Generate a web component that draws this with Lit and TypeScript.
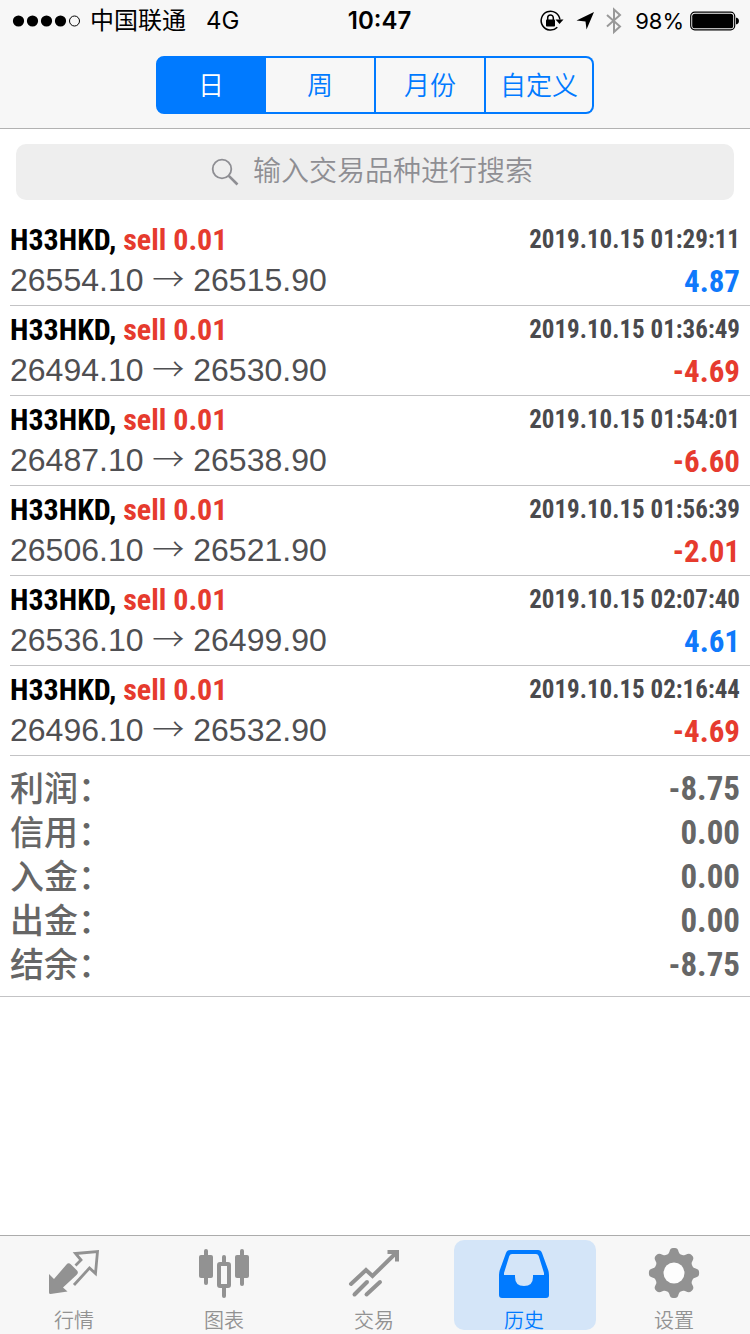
import { LitElement, html, css, svg } from "lit";
import { customElement, property, state } from "lit/decorators.js";
import { classMap } from "lit/directives/class-map.js";

interface Deal {
  symbol: string;
  side: string;
  volume: string;
  open: string;
  close: string;
  time: string;
  profit: string;
}

const deal = (open: string, close: string, time: string, profit: string): Deal => ({
  symbol: "H33HKD",
  side: "sell",
  volume: "0.01",
  open,
  close,
  time: `2019.10.15 ${time}`,
  profit,
});

const DEALS: Deal[] = [
  deal("26554.10", "26515.90", "01:29:11", "4.87"),
  deal("26494.10", "26530.90", "01:36:49", "-4.69"),
  deal("26487.10", "26538.90", "01:54:01", "-6.60"),
  deal("26506.10", "26521.90", "01:56:39", "-2.01"),
  deal("26536.10", "26499.90", "02:07:40", "4.61"),
  deal("26496.10", "26532.90", "02:16:44", "-4.69"),
];

const TOTALS = [
  ["利润", "-8.75"],
  ["信用", "0.00"],
  ["入金", "0.00"],
  ["出金", "0.00"],
  ["结余", "-8.75"],
];

const PERIODS = ["日", "周", "月份", "自定义"];

@customElement("status-bar")
class StatusBar extends LitElement {
  static styles = css`
    :host {
      display: grid;
      grid-template-columns: 1fr auto 1fr;
      align-items: center;
      box-sizing: border-box;
      height: 40px;
      padding: 1px 11px 0 12px;
      color: #000;
      font: 400 24px/40px Inter, "Noto Sans CJK SC", sans-serif;
    }
    .left, .right, .icons { display: flex; align-items: center; }
    .left { gap: 8px; }
    .network { margin-left: 12px; }
    .right { justify-content: flex-end; gap: 6px; }
    .icons { gap: 8px; margin-right: 6px; }
    .time { font-weight: 600; padding-left: 8px; }
    .charge { font-size: 22px; }
    svg { display: block; flex: none; }
  `;
  render() {
    return html`
      <div class="left">
        <svg width="70" height="14" viewBox="0 0 70 14" aria-hidden="true">
          ${[6.5, 20.5, 34.5, 48.5].map((x) => svg`<circle cx=${x} cy="7" r="5.6"/>`)}
          <circle cx="62.5" cy="7" r="5" fill="none" stroke="#000" stroke-width="1"/>
        </svg>
        <span>中国联通</span>
        <span class="network">4G</span>
      </div>
      <div class="time">10:47</div>
      <div class="right">
        <div class="icons">
          <svg width="26" height="24" viewBox="0 0 26 24" aria-hidden="true">
            <path d="M18.3 18.2A9.4 9.4 0 1 1 20.9 10.5" fill="none" stroke="#000" stroke-width="1.5"/>
            <path d="M16.5 10.5h8l-4 4.5z"/>
            <rect x="7" y="10.5" width="9" height="7" rx=".8"/>
            <path d="M8.7 11V8.8a2.8 2.8 0 0 1 5.6 0V11" fill="none" stroke="#000" stroke-width="1.5"/>
          </svg>
          <svg width="24" height="20" viewBox="0 0 24 20" aria-hidden="true">
            <path d="M21 1 13.5 18.5 12.5 10.5 3.5 9.5z"/>
          </svg>
          <svg width="18" height="28" viewBox="0 0 18 28" aria-hidden="true">
            <path d="M2 8 15 19.5 9 25V2.5L15 8 2 19.5" fill="none" stroke="#999" stroke-width="2"/>
          </svg>
        </div>
        <span class="charge">98%</span>
        <svg width="49" height="20" viewBox="0 0 49 20" aria-hidden="true">
          <rect x=".7" y="1.2" width="44" height="17.6" rx="4" fill="none" stroke="#000" stroke-width="1.2"/>
          <rect x="2.2" y="2.7" width="41" height="14.6" rx="2.6"/>
          <path d="M46 6.8h1q2 1 2 3.2t-2 3.2h-1z"/>
        </svg>
      </div>
    `;
  }
}

@customElement("deal-row")
class DealRow extends LitElement {
  @property({ attribute: false }) deal!: Deal;
  static styles = css`
    :host {
      display: grid;
      grid-template-columns: 1fr auto;
      grid-template-rows: 41px 41px;
      height: 90px;
      box-sizing: border-box;
      padding: 3px 10px 0 0;
      margin-left: 10px;
      border-bottom: 1px solid #c3c3c5;
      line-height: 41px;
      white-space: nowrap;
    }
    .title, .time, .profit {
      font-family: "Liberation Sans Narrow", "Roboto Condensed", "Liberation Sans", sans-serif;
      font-weight: 700;
    }
    .title { font-size: 30px; color: #000; }
    .order { color: #e63b2e; }
    .time { font-size: 25px; color: #4a4a4d; text-align: right; }
    .prices { font-size: 32px; color: #4f4f52; }
    .arrow { font-family: "Noto Sans CJK SC", sans-serif; font-weight: 300; line-height: 1; }
    .profit { font-size: 31px; line-height: 43px; color: #0f79fb; text-align: right; }
    .loss { color: #e63b2e; }
  `;
  render() {
    const d = this.deal;
    return html`
      <div class="title">${d.symbol}, <span class="order">${d.side} ${d.volume}</span></div>
      <div class="time">${d.time}</div>
      <div class="prices">${d.open} <span class="arrow">→</span> ${d.close}</div>
      <div class=${classMap({ profit: true, loss: d.profit.startsWith("-") })}>${d.profit}</div>
    `;
  }
}

const gear = () => {
  const pts: string[] = [];
  for (let i = 0; i <= 144; i++) {
    const a = (i / 144) * Math.PI * 2;
    const r = 22.4 + 2.9 * Math.tanh(1.7 * Math.cos(8 * a));
    pts.push(`${(26 + r * Math.sin(a)).toFixed(2)} ${(26 - r * Math.cos(a)).toFixed(2)}`);
  }
  return `M${pts.join("L")}Z`;
};

const TABS = [
  {
    label: "行情",
    icon: svg`
      <path fill="currentColor" d="M1 27 6 32 18.5 17.5Q20.5 15 23 17.5L29 23.5Q31 25.5 28.5 28L15 40.5 19.5 44.5 2.5 47Q1 47 1 45.5z"/>
      <path fill="none" stroke="currentColor" stroke-width="2.8" d="M27.5 18.5 33 13 27.5 6.5 49.5 4.5 47.5 26.5 41.5 21 26 38"/>`,
  },
  {
    label: "图表",
    icon: svg`
      <g fill="currentColor">
        <rect x="1" y="8" width="14" height="23" rx="2"/><rect x="6" y="2" width="4" height="36" rx="2"/>
        <rect x="37" y="8" width="14" height="23" rx="2"/><rect x="42" y="2" width="4" height="37" rx="2"/>
        <rect x="24" y="8" width="4" height="9" rx="2"/><rect x="24" y="38" width="4" height="13" rx="2"/>
      </g>
      <rect x="21" y="17" width="10" height="22" rx="1" fill="none" stroke="currentColor" stroke-width="4"/>`,
  },
  {
    label: "交易",
    icon: svg`
      <g fill="none" stroke="currentColor" stroke-width="4" stroke-linecap="round">
        <path d="M3 37 18 23 24.5 29 49 5"/><path d="M39.5 5H49V14.5" stroke-linecap="butt"/>
        <path d="M6.5 47.5 19 35"/><path d="M18.5 47.5 32 35"/>
      </g>`,
  },
  {
    label: "历史",
    icon: svg`
      <path fill="currentColor" fill-rule="evenodd" d="M12 3H40Q43 3 44 6L50 22.5Q51 25 51 28V48Q51 51 48 51H4Q1 51 1 48V28Q1 25 2 22.5L8 6Q9 3 12 3zM14 7Q12 7 11.3 9L6 26V28H17V30Q17 39 26 39T35 30V28H46V26L40.7 9Q40 7 38 7z"/>`,
  },
  {
    label: "设置",
    icon: svg`
      <path fill="currentColor" d=${gear()}/><circle cx="26" cy="26" r="10.5" fill="#fdfdfd"/>`,
  },
];

@customElement("tab-bar")
class TabBar extends LitElement {
  @state() private active = 3;
  static styles = css`
    :host {
      display: block;
      background: #f7f7f7;
      border-top: 1px solid #acacac;
    }
    .tabs { display: grid; grid-template-columns: repeat(5, 1fr); }
    .tab {
      display: flex;
      flex-direction: column;
      align-items: center;
      gap: 11px;
      height: 90px;
      margin: 4px;
      padding: 7px 2px 0 0;
      box-sizing: border-box;
      border-radius: 10px;
      color: #929292;
      text-decoration: none;
      font: 350 20px/20px "Noto Sans CJK SC", sans-serif;
    }
    .active { background: #d4e5f8; color: #007aff; }
    svg { display: block; flex: none; }
  `;
  private select(e: Event, i: number) {
    e.preventDefault();
    this.active = i;
  }
  render() {
    return html`<nav class="tabs">
      ${TABS.map(
        (t, i) => html`<a
          href="#"
          class=${classMap({ tab: true, active: i === this.active })}
          @click=${(e: Event) => this.select(e, i)}
          ><svg width="52" height="52" viewBox="0 0 52 52" aria-hidden="true">${t.icon}</svg><span>${t.label}</span></a
        >`
      )}
    </nav>`;
  }
}

@customElement("app-root")
class AppRoot extends LitElement {
  @state() private period = 0;
  static styles = css`
    :host {
      display: flex;
      flex-direction: column;
      min-height: 100vh;
      background: #fff;
      font-family: "Liberation Sans", "Noto Sans CJK SC", sans-serif;
    }
    .header { background: #f7f7f7; border-bottom: 1px solid #b2b2b2; }
    .segments {
      display: grid;
      grid-template-columns: 110fr 110fr 110fr 108fr;
      width: 438px;
      max-width: 90%;
      margin: 16px auto 14px;
    }
    .segment {
      box-sizing: border-box;
      height: 58px;
      padding: 0 0 2px;
      border: 2px solid #007aff;
      border-left-width: 0;
      background: none;
      color: #007aff;
      font: 350 26px/50px "Noto Sans CJK SC", sans-serif;
    }
    .segment:first-child { border-left-width: 2px; border-radius: 8px 0 0 8px; }
    .segment:last-child { border-radius: 0 8px 8px 0; }
    .selected { background: #007aff; color: #fff; }
    .main { flex: 1; }
    .search {
      display: flex;
      align-items: center;
      justify-content: center;
      gap: 14px;
      height: 56px;
      margin: 15px 16px 16px;
      border-radius: 10px;
      background: #eee;
    }
    .field {
      width: 286px;
      padding: 0;
      border: 0;
      outline: 0;
      background: none;
      color: #222;
      font: 350 28px/40px "Liberation Sans", "Noto Sans CJK SC", sans-serif;
    }
    .field::placeholder { color: #8e8e93; opacity: 1; }
    .totals {
      margin: 0;
      padding: 11px 10px 9px;
      border-bottom: 1px solid #c3c3c5;
      color: #666;
    }
    .total { display: flex; justify-content: space-between; line-height: 44px; }
    .name { font-size: 34px; font-weight: 500; }
    .value {
      margin: 0;
      font-family: "Liberation Sans Narrow", "Roboto Condensed", "Liberation Sans", sans-serif;
      font-size: 33px;
      font-weight: 700;
    }
  `;
  render() {
    return html`
      <header class="header">
        <status-bar></status-bar>
        <div class="segments">
          ${PERIODS.map(
            (p, i) => html`<button
              type="button"
              class=${classMap({ segment: true, selected: i === this.period })}
              @click=${() => (this.period = i)}
            >${p}</button>`
          )}
        </div>
      </header>
      <main class="main">
        <label class="search">
          <svg width="28" height="28" viewBox="0 0 28 28" fill="none" stroke="#8e8e93" aria-hidden="true">
            <circle cx="11" cy="11" r="9.3" stroke-width="1.8"/>
            <path d="M17.8 17.8 26.5 26.5" stroke-width="2.6"/>
          </svg>
          <input class="field" type="text" aria-label="搜索" placeholder="输入交易品种进行搜索" />
        </label>
        ${DEALS.map((d) => html`<deal-row .deal=${d}></deal-row>`)}
        <dl class="totals">
          ${TOTALS.map(
            ([name, value]) => html`<div class="total"><dt class="name">${name}：</dt><dd class="value">${value}</dd></div>`
          )}
        </dl>
      </main>
      <tab-bar></tab-bar>
    `;
  }
}
